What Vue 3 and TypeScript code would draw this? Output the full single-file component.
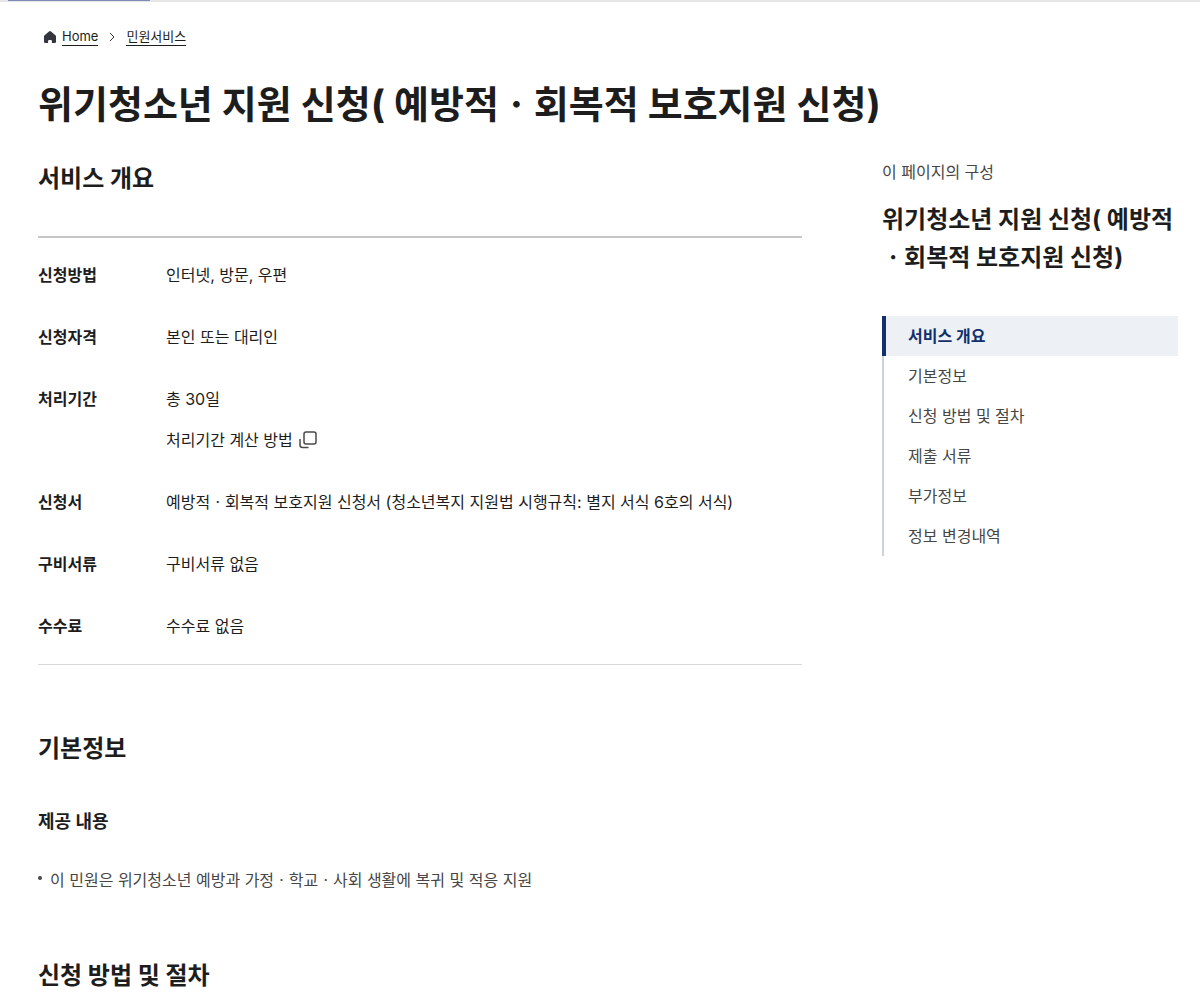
<script setup lang="ts">
interface Row { label: string; value: string; link?: string }
const title = '위기청소년 지원 신청( 예방적ㆍ회복적 보호지원 신청)'
const rows: Row[] = [
  { label: '신청방법', value: '인터넷, 방문, 우편' },
  { label: '신청자격', value: '본인 또는 대리인' },
  { label: '처리기간', value: '총 30일', link: '처리기간 계산 방법' },
  { label: '신청서', value: '예방적ㆍ회복적 보호지원 신청서 (청소년복지 지원법 시행규칙: 별지 서식 6호의 서식)' },
  { label: '구비서류', value: '구비서류 없음' },
  { label: '수수료', value: '수수료 없음' },
]
const sections: string[] = ['서비스 개요', '기본정보', '신청 방법 및 절차', '제출 서류', '부가정보', '정보 변경내역']
</script>

<template>
  <div class="page">
    <div class="progress"><div class="progress-bar"></div></div>
    <nav class="crumbs" aria-label="breadcrumb">
      <svg width="12" height="12" viewBox="0 0 12 12" aria-hidden="true">
        <path d="M5 .4q1-.7 2 0l4.400 3.800q.6.5.6 1.300V10.700q0 1.300-1.300 1.300H8.500q-.6 0-.6-.6V9.900Q7.900 8.900 6.900 8.900H5.100q-1 0-1 1v1.500q0 .6-.6.6H1.300Q0 12 0 10.700V5.500q0-.8.6-1.300z" fill="#33363d" />
      </svg>
      <a href="#">Home</a>
      <svg class="chev" width="6" height="10" viewBox="0 0 6 10" aria-hidden="true"><path d="m1 1 4 4-4 4" fill="none" stroke="#33363d" /></svg>
      <a href="#">민원서비스</a>
    </nav>
    <h1>{{ title }}</h1>
    <div class="columns">
      <main>
        <h2>서비스 개요</h2>
        <dl>
          <div v-for="row in rows" :key="row.label" class="row">
            <dt>{{ row.label }}</dt>
            <dd>
              <p>{{ row.value }}</p>
              <button v-if="row.link" type="button">
                {{ row.link }}
                <svg width="18" height="18" viewBox="0 0 18 18" fill="none" stroke="#4a4a4a" stroke-width="1.5" aria-hidden="true">
                  <rect x="5" y="1" width="12" height="12" rx="2" />
                  <path d="M1 8v6q0 2.500 2.500 2.500h6" />
                </svg>
              </button>
            </dd>
          </div>
        </dl>
        <h2>기본정보</h2>
        <h3>제공 내용</h3>
        <ul><li>이 민원은 위기청소년 예방과 가정ㆍ학교ㆍ사회 생활에 복귀 및 적응 지원</li></ul>
        <h2>신청 방법 및 절차</h2>
      </main>
      <aside>
        <p class="caption">이 페이지의 구성</p>
        <p class="side-title">{{ title }}</p>
        <nav class="toc" aria-label="이 페이지의 구성">
          <a v-for="(s, i) in sections" :key="s" href="#" :class="{ active: i === 0 }">{{ s }}</a>
        </nav>
      </aside>
    </div>
  </div>
</template>

<style>
body { background: #fff; }
</style>
<style scoped>
.page { font-family: Inter, "Noto Sans CJK KR", sans-serif; color: #1d1d1d; font-size: 16px; line-height: 24px; }
h1, h2, h3, p, dl, dd, ul { margin: 0; padding: 0; }
.progress { height: 2px; padding-left: 8px; background: #e6e6e6; }
.progress-bar { width: 142px; height: 1px; background: #7f8bb5; }
.crumbs { display: flex; align-items: center; gap: 6px; padding: 25px 44px 0; font-size: 13px; line-height: 18px; }
.crumbs a { color: inherit; text-decoration: none; border-bottom: 1px solid #1d1d1d; }
.chev { margin: 0 5px; }
h1 { padding: 30px 38px 0; font-size: 38px; line-height: 56px; }
.columns { display: flex; padding: 27px 22px 0 38px; gap: 80px; }
main { flex: 1; min-width: 0; }
h2 { font-size: 24px; line-height: 40px; }
dl { margin: 37px 0 64px; padding: 6px 0 7px; border-top: 2px solid #c6c6c6; border-bottom: 1px solid #d8d8d8; }
.row { display: flex; padding: 19px 0; }
dt { flex: none; width: 128px; font-weight: 700; }
button { display: flex; align-items: center; gap: 6px; margin-top: 17px; padding: 0; border: 0; background: none; font: inherit; color: inherit; }
h3 { margin-top: 40px; font-size: 18px; line-height: 26px; }
ul { margin: 32px 0 63px; line-height: 26px; list-style: none; color: #464646; }
li { display: flex; gap: 8px; }
li::before { content: ""; flex: none; width: 4px; height: 4px; margin-top: 9px; border-radius: 50%; background: #464646; }
aside { flex: none; width: 296px; }
.caption { line-height: 26px; color: #464646; }
.side-title { margin: 16px 0 39px; font-size: 24px; line-height: 38px; font-weight: 700; }
.toc a { display: block; padding: 8px 24px; border-left: 2px solid #cdd1dc; color: #464646; text-decoration: none; }
.toc a.active { padding-left: 22px; border-left: 4px solid #12306b; background: #edf0f5; color: #12306b; font-weight: 700; }
</style>
